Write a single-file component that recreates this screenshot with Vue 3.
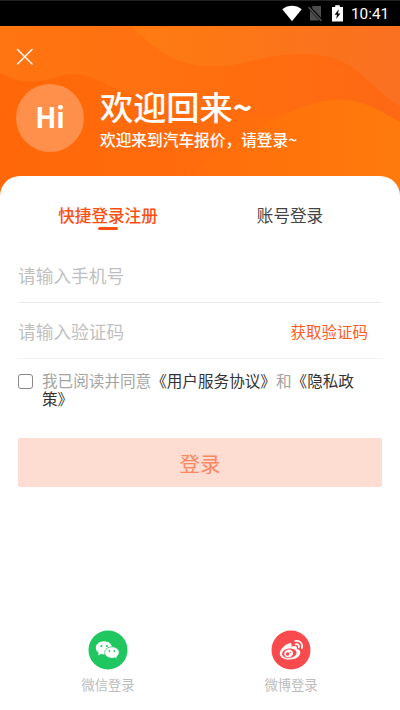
<script setup>
import { ref } from 'vue'

const activeTab = ref(0)
const agreed = ref(false)
const tabs = ['快捷登录注册', '账号登录']
</script>

<template>
  <div class="screen">
    <header class="status">
      <svg class="wifi" viewBox="0 0 20 17"><path d="M0.3 4.2C6 -0.4 14 -0.4 19.7 4.2L10 16.2Z" fill="#fff" /></svg>
      <svg class="sim" viewBox="0 0 15 17">
        <path d="M5 1H13V15.5H2V4Z" fill="#4c4c4c" />
        <path d="M0.5 1.5L14 16" stroke="#000" stroke-width="3" />
        <path d="M0.5 2.2L13.5 15.8" stroke="#5c5c5c" stroke-width="1.3" />
      </svg>
      <svg class="battery" viewBox="0 0 11 17">
        <path d="M3.2 0.3H7.8V2H11V16.5H0V2H3.2Z" fill="#fff" />
        <path d="M6.8 4.2L2.6 9.7H5L4.2 14L8.4 8.4H6Z" fill="#000" />
      </svg>
      <span class="clock">10:41</span>
    </header>

    <section class="hero">
      <svg class="waves" viewBox="0 0 400 180" preserveAspectRatio="none">
        <defs>
          <linearGradient id="base" x1="0" x2="1"><stop offset="0" stop-color="#ff6708" /><stop offset=".5" stop-color="#ff6c0d" /><stop offset="1" stop-color="#ff760b" /></linearGradient>
          <linearGradient id="upper" gradientUnits="userSpaceOnUse" x1="0" x2="400"><stop offset="0" stop-color="#ff7511" /><stop offset=".35" stop-color="#ff7111" /><stop offset=".6" stop-color="#ff6d0f" /><stop offset="1" stop-color="#fd6914" /></linearGradient>
          <linearGradient id="corner" x1="0" x2="1"><stop offset="0" stop-color="#ff7b10" /><stop offset=".5" stop-color="#fc7518" /><stop offset="1" stop-color="#fa7022" /></linearGradient>
          <linearGradient id="lower" gradientUnits="userSpaceOnUse" x1="150" x2="400"><stop offset="0" stop-color="#ff6b0c" /><stop offset=".5" stop-color="#ff730b" /><stop offset="1" stop-color="#ff7a0c" /></linearGradient>
        </defs>
        <rect width="400" height="180" fill="url(#base)" />
        <path d="M0 0H400V100C372 82 350 66 316 79C275 94 200 98 110 60C92 50 80 47 66 49C50 52 40 57 24 55C14 54 6 51 0 47Z" fill="url(#upper)" />
        <path d="M132 0H400V80C371 62 361 40 330 31C295 23 265 32 238 38C182 48 155 24 132 0Z" fill="url(#corner)" />
        <path d="M150 180C220 120 265 99 300 82C348 63 370 79 400 96V180Z" fill="url(#lower)" />
      </svg>
      <div class="heroBody">
        <svg class="close" viewBox="0 0 18 18"><path d="M1 1L16.5 16.5M16.5 1L1 16.5" stroke="#fff" stroke-width="1.4" /></svg>
        <div class="greeting">
          <div class="avatar">Hi</div>
          <div class="words">
            <h1>欢迎回来<b>~</b></h1>
            <p>欢迎来到汽车报价，请登录~</p>
          </div>
        </div>
      </div>
    </section>

    <main class="card">
      <nav class="tabs">
        <div v-for="(tab, i) in tabs" :key="tab" class="tab" :class="{ active: i === activeTab }" @click="activeTab = i">{{ tab }}</div>
      </nav>
      <div class="field phone">请输入手机号</div>
      <div class="field code"><span>请输入验证码</span><span class="getCode">获取验证码</span></div>
      <div class="agreement">
        <span class="check" @click="agreed = !agreed"></span>
        <p>我已阅读并同意<b>《用户服务协议》</b>和<b>《隐私政<br>策》</b></p>
      </div>
      <button class="login">登录</button>
      <footer class="social">
        <div class="provider">
          <svg viewBox="0 0 40 40">
            <circle cx="20" cy="20" r="19.5" fill="#20c761" />
            <path d="M16 11.2C11.3 11.2 7.8 14.1 7.8 17.8C7.8 19.9 8.9 21.7 10.7 22.9L10 25.4L12.9 23.9C14 24.2 15 24.4 16 24.4C20.7 24.4 24.2 21.5 24.2 17.8S20.7 11.2 16 11.2Z" fill="#fff" />
            <path d="M24 16.8C19.9 16.8 16.7 19.3 16.7 22.6S19.9 28.3 24 28.3C25 28.3 25.9 28.1 26.8 27.8L29.2 29.1L28.6 26.9C30.2 25.8 31.2 24.3 31.2 22.6C31.2 19.3 28 16.8 24 16.8Z" fill="#fff" stroke="#20c761" stroke-width=".8" />
            <g fill="#20c761"><circle cx="13.4" cy="16" r="1.1" /><circle cx="19" cy="16" r="1.1" /><circle cx="21.4" cy="21" r=".9" /><circle cx="26.3" cy="21" r=".9" /></g>
          </svg>
          <span>微信登录</span>
        </div>
        <div class="provider">
          <svg viewBox="0 0 40 40">
            <circle cx="20" cy="20" r="19.5" fill="#f94b4e" />
            <path d="M18.3 13.2C20.3 12.6 21.2 14.2 20.4 16.8C23.7 15.4 26.6 15.8 25.8 18.8C28 19.5 29.5 20.8 29.3 23C28.9 26.7 24.3 29.5 18.3 29.5C12.8 29.5 8.8 27 8.8 23.4C8.8 19.5 14 14.5 18.3 13.2Z" fill="#fff" />
            <ellipse cx="18.3" cy="23.3" rx="7.3" ry="4.8" fill="#f94b4e" transform="rotate(-7 18.3 23.3)" />
            <ellipse cx="17.6" cy="23.5" rx="4.5" ry="3.9" fill="#fff" transform="rotate(-15 17.6 23.5)" />
            <circle cx="16.6" cy="24" r="1.8" fill="#f94b4e" /><circle cx="19.3" cy="22.4" r=".7" fill="#f94b4e" />
            <path d="M24.2 11.1C28.6 10 32.3 13.6 30.9 18.1M24.6 14.3C26.9 13.8 28.5 15.4 27.8 17.5" fill="none" stroke="#fff" stroke-width="1.7" stroke-linecap="round" />
          </svg>
          <span>微博登录</span>
        </div>
      </footer>
    </main>
  </div>
</template>

<style>
body { margin: 0; background: #fff; }
</style>

<style scoped>
* { box-sizing: border-box; }
.screen { width: 400px; height: 710px; display: flex; flex-direction: column; overflow: hidden; background: #fff; font-family: "Noto Sans CJK SC", sans-serif; }
h1, p { margin: 0; }
.status { height: 26px; flex: none; background: #000; border-top: 1px solid #202221; display: flex; align-items: flex-start; justify-content: flex-end; padding: 4px 10px 0 0; }
.wifi { width: 20px; height: 17px; margin-right: 6px; }
.sim { width: 15px; height: 17px; margin-right: 9px; }
.battery { width: 11px; height: 17px; margin-right: 8px; }
.clock { width: 39px; font: 400 15.3px/19px Roboto, sans-serif; color: #fff; white-space: nowrap; }
.hero { height: 170px; flex: none; display: grid; }
.waves, .heroBody { grid-area: 1 / 1; }
.waves { width: 400px; height: 180px; }
.heroBody { position: relative; padding: 22px 16px 0; display: flex; flex-direction: column; }
.close { width: 18px; height: 18px; }
.greeting { display: flex; gap: 16px; margin-top: 18px; }
.avatar { width: 68px; height: 68px; flex: none; border-radius: 50%; background: #ff904b; color: #fff; font: 700 28px/64px "Noto Sans CJK SC", sans-serif; text-align: center; }
.words { color: #fff; white-space: nowrap; padding-top: 2px; }
h1 { font-size: 33.2px; line-height: 40px; font-weight: 500; }
h1 b { font-weight: 700; }
.words p { font-size: 15.7px; line-height: 20px; font-weight: 500; margin-top: 4px; }
.card { position: relative; flex: 1; margin-top: -20px; background: #fff; border-radius: 20px 20px 0 0; padding: 0 18px; display: flex; flex-direction: column; }
.tabs { display: grid; grid-template-columns: 1fr 1fr; height: 71px; padding-top: 27px; margin-left: -1px; margin-right: 1px; }
.tab { font-size: 16.6px; line-height: 24px; text-align: center; color: #444; display: flex; flex-direction: column; align-items: center; }
.active { color: #fc4f12; font-weight: 500; }
.active::after { content: ""; width: 20px; height: 3px; border-radius: 2px; background: #fc4f12; }
.field { border-bottom: 1px solid #e9e9e9; display: flex; align-items: center; justify-content: space-between; font-size: 17.7px; color: #bfbfbf; }
.phone { height: 56px; }
.code { height: 56px; border-color: #f3f3f3; }
.getCode { font-size: 15.5px; color: #fc5b24; padding-right: 14px; }
.agreement { display: flex; gap: 9px; padding-top: 12px; height: 79px; font-size: 15.6px; line-height: 18px; color: #a4a4a4; }
.agreement b { font-weight: 400; color: #333; }
.agreement p { white-space: nowrap; }
.check { width: 15px; height: 15px; border: 1.5px solid #888; border-radius: 3px; margin-top: 3px; flex: none; }
.login { height: 49px; border: 0; border-radius: 2px; background: #fddcd2; color: #fb8860; font: 400 20.5px/51px "Noto Sans CJK SC", sans-serif; padding: 0; }
.social { display: grid; grid-template-columns: 1fr 1fr; margin-top: 143px; }
.provider { display: flex; flex-direction: column; align-items: center; font-size: 13.3px; line-height: 20px; color: #bcbcbc; }
.provider svg { width: 40px; height: 40px; margin-bottom: 5px; }
.provider:first-child { padding-right: 2px; }
</style>
